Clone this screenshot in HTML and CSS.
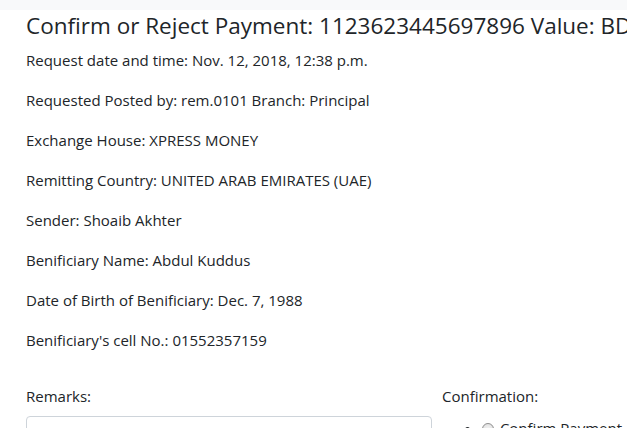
FILE: index.html
```html
<!DOCTYPE html>
<html>
<head>
<meta charset="utf-8">
<link rel="stylesheet" href="styles.css">
</head>
<body>
<div class="topbar"></div>
<div class="container">
  <h4 class="title">Confirm or Reject Payment: 1123623445697896 Value: BDT 50000</h4>
  <p>Request date and time: Nov. 12, 2018, 12:38 p.m.</p>
  <p>Requested Posted by: rem.0101 Branch: Principal</p>
  <p>Exchange House: XPRESS MONEY</p>
  <p>Remitting Country: UNITED ARAB EMIRATES (UAE)</p>
  <p>Sender: Shoaib Akhter</p>
  <p>Benificiary Name: Abdul Kuddus</p>
  <p>Date of Birth of Benificiary: Dec. 7, 1988</p>
  <p>Benificiary's cell No.: 01552357159</p>
  <form class="form">
    <div class="col-left">
      <label class="label">Remarks:</label>
      <textarea class="textarea"></textarea>
    </div>
    <div class="col-right">
      <label class="label">Confirmation:</label>
      <ul class="choices">
        <li><label><input type="radio" name="c"> Confirm Payment</label></li>
        <li><label><input type="radio" name="c"> Reject Payment</label></li>
      </ul>
    </div>
  </form>
</div>
</body>
</html>
```
FILE: styles.css
```css
html, body {
  margin: 0;
  padding: 0;
  background: #fff;
  overflow: hidden;
}
body {
  font-family: "Open Sans", "Noto Sans", sans-serif;
  font-size: 15px;
  line-height: 24px;
  color: #212529;
}
.topbar {
  height: 10px;
  background: #f8f9fa;
}
.container {
  padding: 0 0 0 26px;
  white-space: nowrap;
}
.title {
  margin: 1px 0 8px;
  font-size: 22.5px;
  font-weight: 400;
  line-height: 29px;
}
p {
  margin: 0 0 16px;
}
.form {
  display: flex;
  padding-top: 16px;
}
.col-left {
  width: 406px;
  display: flex;
  flex-direction: column;
}
.col-right {
  margin-left: 10px;
  display: flex;
  flex-direction: column;
}
.label {
  display: block;
  margin-bottom: 8px;
}
.textarea {
  box-sizing: border-box;
  width: 406px;
  height: 80px;
  border: 1px solid #ced4da;
  border-radius: 4px;
  padding: 6px 12px;
  resize: none;
}
.choices {
  margin: 0;
  padding-left: 40px;
}
.choices input {
  -webkit-appearance: none;
  appearance: none;
  box-sizing: border-box;
  margin: 0 2px 0 0;
  width: 12px;
  height: 12px;
  border: 1px solid #8f8f8f;
  border-radius: 50%;
  background: radial-gradient(circle, #f4f4f4 0, #dcdcdc 100%);
  vertical-align: -1px;
}
```
